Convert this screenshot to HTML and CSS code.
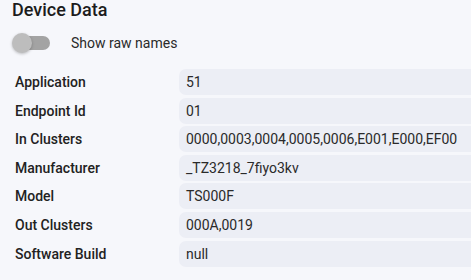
FILE: index.html
```html
<!DOCTYPE html>
<html>
<head>
<meta charset="utf-8">
<link rel="stylesheet" href="styles.css">
</head>
<body>
<div class="page">
  <h2 class="title">Device Data</h2>
  <div class="toggle-row">
    <span class="switch"><span class="track"></span><span class="thumb"></span></span>
    <span class="toggle-label">Show raw names</span>
  </div>
  <div class="table">
    <div class="label">Application</div><div class="value">51</div>
    <div class="label">Endpoint Id</div><div class="value">01</div>
    <div class="label">In Clusters</div><div class="value">0000,0003,0004,0005,0006,E001,E000,EF00</div>
    <div class="label">Manufacturer</div><div class="value">_TZ3218_7fiyo3kv</div>
    <div class="label">Model</div><div class="value">TS000F</div>
    <div class="label">Out Clusters</div><div class="value">000A,0019</div>
    <div class="label">Software Build</div><div class="value">null</div>
  </div>
</div>
</body>
</html>
```
FILE: styles.css
```css
html, body {
  margin: 0;
  padding: 0;
  background: #f6f7fb;
}
body {
  font-family: Roboto, "Noto Sans", sans-serif;
  color: #222;
  width: 471px;
  height: 280px;
  overflow: hidden;
}
.page {
  padding: 0 0 0 12px;
}
.title {
  margin: 0;
  padding-top: 0;
  font-size: 18px;
  font-weight: 500;
  line-height: 20px;
  color: #1c1c1c;
}
.toggle-row {
  display: flex;
  align-items: center;
  height: 24px;
  margin-top: 11px;
}
.switch {
  position: relative;
  width: 38px;
  height: 20px;
  flex: none;
}
.track {
  position: absolute;
  left: 2px;
  top: 3px;
  width: 36px;
  height: 14px;
  border-radius: 7px;
  background: #a3a3a3;
}
.thumb {
  position: absolute;
  left: 0;
  top: 0;
  width: 20px;
  height: 20px;
  border-radius: 50%;
  background: #bdbdbd;
  box-shadow: 0 1px 3px rgba(0,0,0,0.25);
}
.toggle-label {
  margin-left: 21px;
  font-size: 14px;
  color: #2a2a2a;
}
.table {
  display: grid;
  grid-template-columns: 164px 1fr;
  row-gap: 2.6px;
  margin-top: 14px;
  padding-left: 3px;
}
.label, .value {
  height: 26px;
  line-height: 26px;
  font-size: 14px;
}
.label {
  font-weight: 500;
  color: #222;
}
.value {
  background: #eceef5;
  border-radius: 7px 0 0 7px;
  padding-left: 7px;
  color: #2a2a2a;
}
```
